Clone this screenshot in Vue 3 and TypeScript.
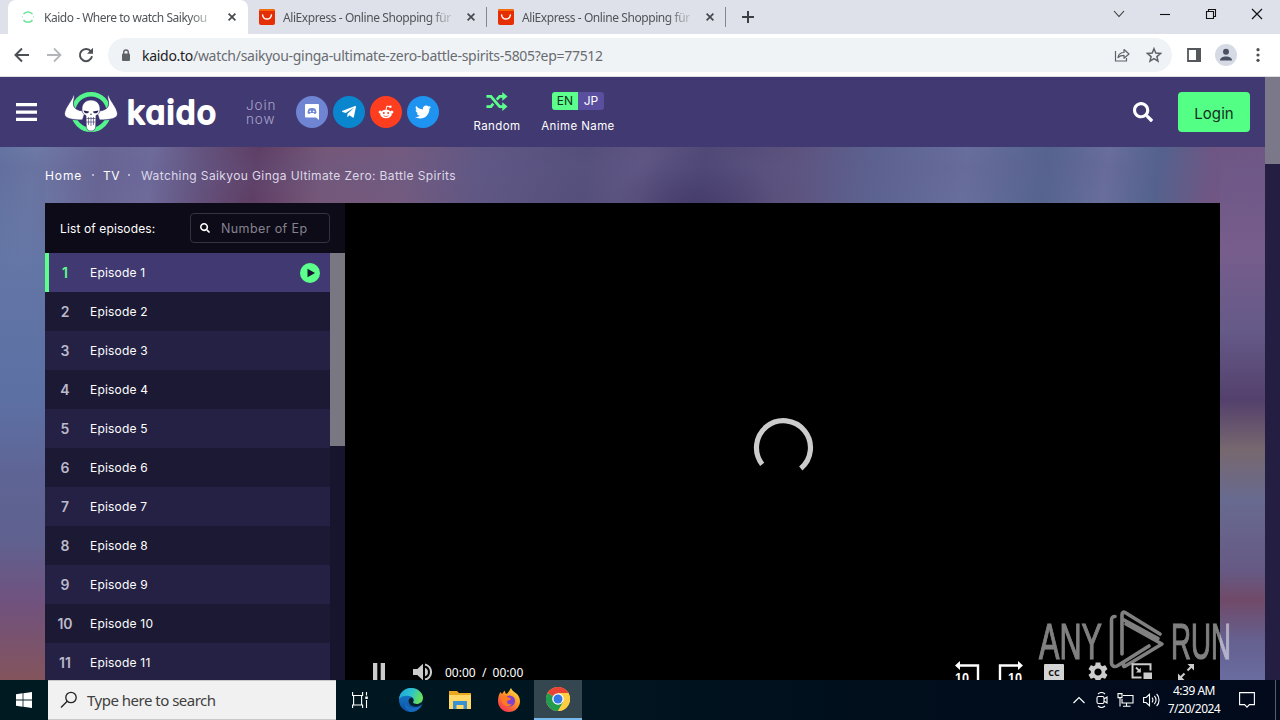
<script setup lang="ts">
interface Tab {
  title: string
  kind: 'kaido' | 'ali'
  active: boolean
}

const tabs: Tab[] = [
  { title: 'Kaido - Where to watch Saikyou', kind: 'kaido', active: true },
  { title: 'AliExpress - Online Shopping für', kind: 'ali', active: false },
  { title: 'AliExpress - Online Shopping für', kind: 'ali', active: false },
]

const episodes: number[] = Array.from({ length: 11 }, (_, i) => i + 1)
</script>

<template>
  <div class="screen">
    <div class="tabstrip">
      <div v-for="(tab, i) in tabs" :key="i" class="tab" :class="{ active: tab.active }">
        <svg v-if="tab.kind === 'kaido'" class="fav" viewBox="0 0 16 16" fill="none" stroke="#6fe39a" stroke-width="1.5">
          <path d="M3.500 5.200a5.200 4.500 0 0 1 9 0" />
          <path d="M3.500 11a5.200 4.500 0 0 0 9 0" />
          <path d="M2.500 7v2M13.500 7v2" stroke="#c5f3d4" stroke-width="1" />
        </svg>
        <svg v-else class="fav" viewBox="0 0 16 16">
          <rect width="16" height="16" rx="2" fill="#e62e04" />
          <path d="M0 2a2 2 0 0 1 2-2h12a2 2 0 0 1 2 2H0z" fill="#f26a0c" />
          <path d="M3.600 6c.8 5.400 8 5.400 8.800 0" fill="none" stroke="#fff" stroke-width="1.500" stroke-linecap="round" />
        </svg>
        <span class="tab-title">{{ tab.title }}</span>
        <svg class="close" viewBox="0 0 8 8" stroke="#45494d" stroke-width="1.700"><path d="M.6.6l6.800 6.800M7.400.6L.6 7.400" /></svg>
      </div>
      <svg class="plus" viewBox="0 0 12 12" stroke="#3c4043" stroke-width="2"><path d="M6 0v12M0 6h12" /></svg>
      <div class="winbtns">
        <svg width="12" height="12" viewBox="0 0 12 12" fill="none" stroke="#333" stroke-width="1.100"><path d="M1 3l5 5.500L11 3" /></svg>
        <svg width="12" height="12" viewBox="0 0 12 12" stroke="#111" stroke-width="1.100"><path d="M1 6.500h10" /></svg>
        <svg width="12" height="12" viewBox="0 0 12 12" fill="none" stroke="#111" stroke-width="1.100"><path d="M1.500 3.500h7v7h-7zM3.500 3.500v-2h7v7h-2" /></svg>
        <svg width="12" height="12" viewBox="0 0 12 12" stroke="#111" stroke-width="1.200"><path d="M1 1l10 10M11 1L1 11" /></svg>
      </div>
    </div>

    <div class="toolbar">
      <div class="nav">
        <svg width="16" height="16" viewBox="0 0 16 16" fill="none" stroke="#4c5054" stroke-width="2"><path d="M15 8H2M8 1.500L1.500 8 8 14.500" /></svg>
        <svg width="16" height="16" viewBox="0 0 16 16" fill="none" stroke="#b4b6b9" stroke-width="1.800"><path d="M1 8h13M8 1.500L14.500 8 8 14.500" /></svg>
        <svg width="16" height="16" viewBox="0 0 16 16"><path d="M13 4.500A6.100 6.100 0 1 0 14 9.300" fill="none" stroke="#4c5054" stroke-width="2" /><path d="M15 .8v6H9z" fill="#4c5054" /></svg>
      </div>
      <div class="omnibox">
        <svg class="lock" width="10" height="13" viewBox="0 0 10 13"><rect x="1" y="4.500" width="8" height="7.500" rx="1" fill="#5f6368" /><path d="M2.700 5V3.300a2.300 2.300 0 0 1 4.600 0V5" fill="none" stroke="#5f6368" stroke-width="1.400" /></svg>
        <span class="url"><b>kaido.to</b>/watch/saikyou-ginga-ultimate-zero-battle-spirits-5805?ep=77512</span>
        <svg class="share" width="16" height="16" viewBox="0 0 16 16" fill="none" stroke="#5f6368" stroke-width="1.200"><path d="M1.500 4v10h11v-3" /><path d="M4 10.500c.6-3.500 2.600-5 6-5V2.500L15 7l-5 4.200V8.300c-3 0-4.500.7-6 2.200z" stroke-linejoin="round" /></svg>
        <svg width="16" height="16" viewBox="0 0 16 16" fill="none" stroke="#5f6368" stroke-width="1.500"><path d="M8 1.700l1.800 4.400 4.700.4-3.600 3.100 1.100 4.600L8 11.700l-4 2.500 1.100-4.600L1.500 6.500l4.700-.4z" /></svg>
      </div>
      <svg class="panel" width="14" height="14" viewBox="0 0 14 14"><path d="M1 1h12v12H1z" fill="none" stroke="#54585c" stroke-width="1.800" /><path d="M9 0h5v14H9z" fill="#54585c" /></svg>
      <svg class="avatar" width="22" height="22" viewBox="0 0 22 22"><circle cx="11" cy="11" r="11" fill="#d6dae5" /><circle cx="11" cy="7.800" r="3" fill="#4a5062" /><path d="M5 16.500c0-5.300 12-5.300 12 0z" fill="#4a5062" /></svg>
      <svg class="dots" width="4" height="14" viewBox="0 0 4 14" fill="#4c5054"><circle cx="2" cy="1.700" r="1.600" /><circle cx="2" cy="7" r="1.600" /><circle cx="2" cy="12.300" r="1.600" /></svg>
    </div>

    <div class="viewport">
      <div class="site">
        <header class="header">
          <svg class="burger" width="21" height="18" viewBox="0 0 21 18" fill="#fff"><path d="M0 0h21v3.300H0zM0 7.400h21v3.300H0zM0 14.700h21V18H0z" /></svg>
          <svg class="logo" width="154" height="42" viewBox="0 0 154 42">
            <circle cx="27" cy="21" r="17.800" fill="#3a3270" stroke="#54f58b" stroke-width="4.400" />
            <path d="M9.500 3C9 9 1 16 .5 22.500c-.3 5 7 6.500 18 6.500l3-9C13 20 8.500 17 9.500 11c.5-3 1.500-5 0-8zM44.500 3c.5 6 8.500 13 9 19.500.3 5-7 6.500-18 6.500l-3-9c8.500 0 13-3 12-9-.5-3-1.500-5 0-8z" fill="#fff" stroke="#3a3270" stroke-width=".8" />
            <path d="M27 9c-6 0-9.500 4.500-9 10 .2 3 1.800 4.500 4 5.500l.3 11c.3 3 2 4.500 4.700 4.500s4.400-1.500 4.700-4.500l.3-11c2.200-1 3.800-2.500 4-5.500C36.500 13.500 33 9 27 9z" fill="#fff" stroke="#3a3270" stroke-width=".6" />
            <path d="M19.500 19.500l5.500 1c0 2.500-4.800 2.700-5.500-1zM34.500 19.500L29 20.500c0 2.500 4.800 2.700 5.500-1zM26.200 24l.8-2 .8 2z" fill="#29254e" />
            <path d="M22.500 27.500h9M22.500 31h9M24.500 26v8M27 26v9M29.500 26v8" stroke="#4c4775" stroke-width=".7" />
            <text class="wordmark" x="63" y="33" textLength="89">kaido</text>
          </svg>
          <div class="join">Join<br />now</div>
          <div class="socials">
            <i class="discord"><svg width="16" height="18" viewBox="0 0 16 18"><path d="M2 1h12a1 1 0 0 1 1 1v15l-3-2.500H2a1 1 0 0 1-1-1V2a1 1 0 0 1 1-1z" fill="#fff" /><path d="M3.500 10c.2-2 .8-3.800 1.500-4.500 2-.8 4-.8 6 0 .7.700 1.300 2.500 1.500 4.500-1 1-1.700 1-2.300.8l-.6-.8H6.400l-.6.800c-.8.200-1.500.1-2.300-.8z" fill="#6f84d2" /><circle cx="6.300" cy="8.300" r=".9" fill="#fff" /><circle cx="9.700" cy="8.300" r=".9" fill="#fff" /></svg></i>
            <i class="telegram"><svg width="16" height="16" viewBox="0 0 448 512"><path fill="#fff" d="M446.700 98.600l-67.600 318.800c-5.100 22.500-18.400 28.100-37.300 17.500l-103-75.900-49.700 47.800c-5.500 5.500-10.100 10.100-20.700 10.100l7.400-104.900 190.900-172.500c8.300-7.400-1.800-11.500-12.900-4.100L117.800 284 16.200 252.200c-22.100-6.900-22.500-22.100 4.600-32.700L418.200 66.400c18.400-6.900 34.500 4.100 28.500 32.200z" /></svg></i>
            <i class="reddit"><svg width="16" height="16" viewBox="0 0 16 16"><ellipse cx="8" cy="10" rx="5.800" ry="4.300" fill="#fff" /><circle cx="2.200" cy="8" r="1.600" fill="#fff" /><circle cx="13.800" cy="8" r="1.600" fill="#fff" /><path d="M8 6l.9-4 3.200.8" fill="none" stroke="#fff" /><circle cx="12.400" cy="2.800" r="1.200" fill="#fff" /><circle cx="5.800" cy="9" r="1" fill="#ff3d1f" /><circle cx="10.200" cy="9" r="1" fill="#ff3d1f" /><path d="M5.600 11.700c1.300 1 3.500 1 4.800 0" fill="none" stroke="#ff3d1f" stroke-width=".8" /></svg></i>
            <i class="twitter"><svg width="16" height="16" viewBox="0 0 512 512"><path fill="#fff" d="M459.370 151.716c.325 4.548.325 9.097.325 13.645 0 138.720-105.583 298.558-298.558 298.558-59.452 0-114.680-17.219-161.137-47.106 8.447.974 16.568 1.299 25.340 1.299 49.055 0 94.213-16.568 130.274-44.832-46.132-.975-84.792-31.188-98.112-72.772 6.498.974 12.995 1.624 19.818 1.624 9.421 0 18.843-1.300 27.614-3.573-48.081-9.747-84.143-51.980-84.143-102.985v-1.299c13.969 7.797 30.214 12.670 47.431 13.319-28.264-18.843-46.781-51.005-46.781-87.391 0-19.492 5.197-37.360 14.294-52.954 51.655 63.675 129.300 105.258 216.365 109.807-1.624-7.797-2.599-15.918-2.599-24.040 0-57.828 46.782-104.934 104.934-104.934 30.213 0 57.502 12.670 76.670 33.137 23.715-4.548 46.456-13.320 66.599-25.340-7.798 24.366-24.366 44.833-46.132 57.827 21.117-2.273 41.584-8.122 60.426-16.243-14.292 20.791-32.161 39.308-52.628 54.253z" /></svg></i>
          </div>
          <div class="tool random">
            <svg width="22" height="19" viewBox="0 0 20 18"><path d="M0 4.200h4.200L12.500 13.800H16M0 13.800h4.200l2.300-2.700M9.800 7.200l2.700-3H16" fill="none" stroke="#5cff8c" stroke-width="2.600" /><path d="M15 0l5 4.200-5 4.200zM15 9.600l5 4.200-5 4.200z" fill="#5cff8c" /></svg>
            <span>Random</span>
          </div>
          <div class="tool names">
            <div class="langs"><b>EN</b><b>JP</b></div>
            <span>Anime Name</span>
          </div>
          <svg class="find" width="20" height="20" viewBox="0 0 512 512" fill="#fff"><path d="M505 442.700L405.300 343c-4.500-4.500-10.600-7-17-7H372c27.600-35.300 44-79.700 44-128C416 93.100 322.900 0 208 0S0 93.100 0 208s93.100 208 208 208c48.300 0 92.700-16.400 128-44v16.300c0 6.400 2.500 12.500 7 17l99.700 99.700c9.400 9.400 24.600 9.400 33.900 0l28.300-28.300c9.400-9.400 9.400-24.600.1-34zM208 336c-70.700 0-128-57.200-128-128 0-70.700 57.200-128 128-128 70.700 0 128 57.200 128 128 0 70.700-57.200 128-128 128z" /></svg>
          <button class="login">Login</button>
        </header>

        <main class="main">
          <nav class="crumbs"><span class="home">Home</span><i></i><span class="tv">TV</span><i></i><em>Watching Saikyou Ginga Ultimate Zero: Battle Spirits</em></nav>
          <section class="watch">
            <aside class="list">
              <div class="list-head">
                <span>List of episodes:</span>
                <div class="filter">
                  <svg width="10" height="10" viewBox="0 0 512 512" fill="#fff"><path d="M505 442.700L405.300 343c-4.500-4.500-10.600-7-17-7H372c27.600-35.300 44-79.700 44-128C416 93.100 322.900 0 208 0S0 93.100 0 208s93.100 208 208 208c48.300 0 92.700-16.400 128-44v16.300c0 6.400 2.500 12.500 7 17l99.700 99.700c9.400 9.400 24.600 9.400 33.900 0l28.300-28.300c9.400-9.400 9.400-24.600.1-34zM208 336c-70.700 0-128-57.200-128-128 0-70.700 57.200-128 128-128 70.700 0 128 57.200 128 128 0 70.700-57.200 128-128 128z" /></svg>
                  <span>Number of Ep</span>
                </div>
              </div>
              <div class="list-body">
                <ul>
                  <li v-for="n in episodes" :key="n" :class="{ on: n === 1 }">
                    <b>{{ n }}</b><span>Episode {{ n }}</span>
                    <svg v-if="n === 1" width="20" height="20" viewBox="0 0 20 20"><circle cx="10" cy="10" r="10" fill="#5cff8c" /><path d="M7.500 5.700l7.500 4.300-7.500 4.300z" fill="#171530" /></svg>
                  </li>
                </ul>
                <div class="list-scroll"><div></div></div>
              </div>
            </aside>
            <div class="player">
              <svg class="spinner" width="64" height="64" viewBox="0 0 64 64"><path d="M12.200 48.300A27 27 0 1 1 50.800 52.400" fill="none" stroke="#ccc" stroke-width="5.200" /></svg>
              <div class="controls">
                <svg class="pause" width="12" height="18" viewBox="0 0 12 18" fill="#ccc"><path d="M0 0h4.300v18H0zM7.700 0H12v18H7.700z" /></svg>
                <svg class="vol" width="20" height="18" viewBox="0 0 20 18"><path d="M0 6h4.300L10 .7v16.600L4.300 12H0z" fill="#ccc" /><path d="M12 1.400a7.800 7.800 0 0 1 0 15.200" fill="none" stroke="#ccc" stroke-width="2.100" /><path d="M12 4.700a4.600 4.600 0 0 1 0 8.600z" fill="#ccc" /></svg>
                <span class="time">00:00&nbsp; /&nbsp; 00:00</span>
                <svg class="back" width="26" height="26" viewBox="0 0 26 26"><path d="M4 4.500h19V26" fill="none" stroke="#fff" stroke-width="2.400" /><path d="M0 4.500L5 0v9z" fill="#fff" /><text x="0" y="22" textLength="14" lengthAdjust="spacingAndGlyphs">10</text></svg>
                <svg class="fwd" width="26" height="26" viewBox="0 0 26 26"><path d="M22 4.500H3V26" fill="none" stroke="#fff" stroke-width="2.400" /><path d="M26 4.500L21 0v9z" fill="#fff" /><text x="11" y="22" textLength="14" lengthAdjust="spacingAndGlyphs">10</text></svg>
                <div class="cc">CC</div>
                <svg class="gear" width="20" height="20" viewBox="2 2 20 20"><path fill="#ccc" d="M19.140 12.940c.04-.3.06-.61.06-.94 0-.32-.02-.64-.07-.94l2.030-1.580c.18-.14.23-.41.12-.61l-1.920-3.320c-.12-.22-.37-.29-.59-.22l-2.390.96c-.5-.38-1.030-.7-1.620-.94l-.36-2.540c-.04-.24-.24-.41-.48-.41h-3.840c-.24 0-.43.17-.47.41l-.36 2.540c-.59.24-1.130.57-1.620.94l-2.390-.96c-.22-.08-.47 0-.59.22L2.740 8.870c-.12.21-.08.47.12.61l2.030 1.580c-.05.3-.09.63-.09.94s.02.64.07.94l-2.030 1.580c-.18.14-.23.41-.12.61l1.920 3.320c.12.22.37.29.59.22l2.390-.96c.5.38 1.030.7 1.620.94l.36 2.540c.05.24.24.41.48.41h3.840c.24 0 .44-.17.47-.41l.36-2.540c.59-.24 1.130-.56 1.620-.94l2.390.96c.22.08.47 0 .59-.22l1.920-3.320c.12-.22.07-.47-.12-.61l-2.010-1.580zM12 15.600c-1.980 0-3.600-1.620-3.600-3.600s1.620-3.600 3.600-3.600 3.600 1.620 3.600 3.600-1.620 3.600-3.600 3.600z" /></svg>
                <svg class="pip" width="22" height="18" viewBox="0 0 22 18"><path d="M10.500 14.500h-9V1.200h18v6.300" fill="none" stroke="#ccc" stroke-width="2" /><path d="M12.500 9.500H21V16h-8.500z" fill="#ccc" /><path d="M5 4.500l3.500 3.500" stroke="#ccc" stroke-width="1.800" /><path d="M9.800 4.800v4.800H5z" fill="#ccc" /></svg>
                <svg class="full" width="18" height="18" viewBox="0 0 18 18"><path d="M3 15l4.500-4.500M10.500 7.500L15 3" stroke="#ccc" stroke-width="2" /><path d="M10.500 1H17v6.500zM1 10.500V17h6.500z" fill="#ccc" /></svg>
              </div>
            </div>
          </section>
        </main>
      </div>
      <div class="page-scroll"><div></div></div>
    </div>

    <div class="taskbar">
      <svg class="win" width="16" height="16" viewBox="0 0 16 16" fill="#fff"><path d="M0 2.300l6.600-1v6.300H0zM7.400 1.200L16 0v7.600H7.400zM0 8.400h6.600v6.300l-6.600-1zM7.400 8.400H16V16l-8.600-1.200z" /></svg>
      <div class="search">
        <svg width="18" height="18" viewBox="0 0 18 18" fill="none" stroke="#222" stroke-width="1.300"><circle cx="11" cy="6.500" r="5.200" /><path d="M7.200 10.200L1 16.500" /></svg>
        <span>Type here to search</span>
      </div>
      <div class="app"><svg width="16" height="16" viewBox="0 0 16 16" fill="none" stroke="#fff" stroke-width="1.100"><path d="M.6 0v3.500h10V0M.6 16v-3h10v3M1.600 3.500v9.500h8V3.500M14.500 0v3.500M14.500 8v8" /><path d="M13.300 4.500h2.500v2.500h-2.500z" fill="#fff" stroke="none" /></svg></div>
      <div class="app edge">
        <svg width="24" height="24" viewBox="0 0 24 24">
          <defs>
            <linearGradient id="eg" x1="0" y1="0" x2="1" y2=".3"><stop offset="0" stop-color="#1fa6dc" /><stop offset=".55" stop-color="#2cc3cf" /><stop offset="1" stop-color="#66e05b" /></linearGradient>
            <linearGradient id="eb" x1="0" y1="0" x2="0" y2="1"><stop offset="0" stop-color="#1686d5" /><stop offset="1" stop-color="#0d4f9e" /></linearGradient>
          </defs>
          <circle cx="12" cy="12" r="12" fill="url(#eb)" />
          <path d="M0 11C1 4 6 0 12 0c7 0 12 5 12 10 0 4-3 6-6.500 6-2 0-4-.8-3.400-2 1.300-1.500 1-5-3.600-6C6 7 2 8 0 11z" fill="url(#eg)" />
          <path d="M13 9.500c-4 0-5 6 0 8.500 3.500 1.700 7.500.5 9.800-1.500l1.200.5V11c-.6 3.600-3.400 5-6.500 5-2 0-4-.8-3.400-2 .8-1.200.8-3-1.100-4.500z" fill="#06202e" />
          <path d="M22.500 17.300C20 22 16 24 12 24c-4.500-1-7-5-5.500-9.500C8 20 15 21.500 22.500 17.300z" fill="#1769bd" />
        </svg>
      </div>
      <div class="app"><svg width="22" height="20" viewBox="0 0 22 20"><path d="M0 1h8l2 2h12v16H0z" fill="#e9a820" /><path d="M0 5h22v14H0z" fill="#ffd868" /><path d="M4 11h14v8h-3.500v-4h-7v4H4z" fill="#3a91cf" /></svg></div>
      <div class="app">
        <svg width="24" height="24" viewBox="0 0 24 24">
          <defs><linearGradient id="ff" x1=".9" y1="0" x2=".2" y2="1"><stop offset="0" stop-color="#fff04a" /><stop offset=".45" stop-color="#ff9324" /><stop offset="1" stop-color="#f52d55" /></linearGradient></defs>
          <path d="M14 0c1 3 4 4 6 6 3 3 3.500 7 2.500 10.500C21 21 17 24 12 24 5.500 24 1 19 1 13c0-4 1-7 2.500-9L5 6l2.500-3.500L9 6c2 0 3-3 5-6z" fill="url(#ff)" />
          <circle cx="12.500" cy="13" r="5.600" fill="#8141cf" />
          <path d="M5 8c3-1 5 0 6 1.500 2 0 3 .8 3 1.500-1 1.500-3 1-4 2.500-.5 2 2 3.500 5 2.500-3 4-10 2-10-3z" fill="#ff7b22" />
        </svg>
      </div>
      <div class="app current">
        <svg width="24" height="24" viewBox="0 0 24 24"><circle cx="12" cy="12" r="12" fill="#ffcd42" /><path d="M12 12L1.600 6A12 12 0 0 1 22.400 6z" fill="#ea4335" /><path d="M1.600 6A12 12 0 0 0 12 24l5.200-9L12 12z" fill="#249c4e" /><path d="M22.400 6H12v6l5.200 3L12 24A12 12 0 0 0 22.400 6z" fill="#ffcd42" /><circle cx="12" cy="12" r="5.800" fill="#fff" /><circle cx="12" cy="12" r="4.500" fill="#3478e5" /></svg>
      </div>
      <div class="tray">
        <svg class="chev" width="12" height="8" viewBox="0 0 12 8" fill="none" stroke="#fff" stroke-width="1.200"><path d="M.5 7L6 1.500 11.500 7" /></svg>
        <svg width="12" height="16" viewBox="0 0 12 16" fill="none" stroke="#fff" stroke-width="1.100"><rect x="1" y="4.500" width="7" height="7" rx="1.500" /><path d="M8 7l3-2v6L8 9M2 2c2-1.700 5-1.700 7 0M2 14c2 1.700 5 1.700 7 0" /></svg>
        <svg width="17" height="14" viewBox="0 0 16 14" fill="none" stroke="#fff" stroke-width="1.100"><path d="M5.500 2.500h10v7.500h-11V6M9 10v3M5.500 13.300h7.500M.5.600h4v4h-4zM2.500 4.600v9" /></svg>
        <svg width="17" height="14" viewBox="0 0 17 14" fill="none" stroke="#fff" stroke-width="1.100"><path d="M.6 4.500h2.500L6.500 1.300v11.400L3.100 9.500H.6zM9 4.700c1.200 1.200 1.200 3.400 0 4.600M11.300 2.900c2.300 2.200 2.300 6 0 8.200M13.600 1c3.300 3.200 3.300 8.800 0 12" /></svg>
      </div>
      <div class="clock"><span>4:39 AM</span><span>7/20/2024</span></div>
      <svg class="note" width="16" height="16" viewBox="0 0 16 16" fill="none" stroke="#fff" stroke-width="1.100"><path d="M.6.6h14.800v12h-5l-2.400 2.600-2.400-2.600h-5z" /></svg>
      <i class="peek"></i>
    </div>

    <svg class="watermark" width="196" height="66" viewBox="0 0 196 66">
      <text x="2" y="51" textLength="63" lengthAdjust="spacingAndGlyphs">ANY</text>
      <g fill="none" stroke="#fff" stroke-width="3.600" stroke-linejoin="round" stroke-linecap="round">
        <path d="M78 8.500c-3 0-3.500 1.500-3.500 4v42c0 3.500 3 5 6 3.200L112 38" />
        <path d="M123 26L88.500 4.700c-2-1.200-3.500-.5-3.500 2V46" />
        <path d="M121 30.500L87 12M89 16l36 20-36.500 22c-1.500 1-2.500 0-2-2" />
      </g>
      <text x="134" y="51" textLength="60" lengthAdjust="spacingAndGlyphs">RUN</text>
    </svg>
  </div>
</template>

<style>
body {
  background: #000;
  overflow: hidden;
}
</style>

<style scoped>
* {
  box-sizing: border-box;
}
svg {
  display: block;
  flex: none;
}
.screen {
  position: relative;
  display: flex;
  flex-direction: column;
  width: 1280px;
  height: 720px;
  overflow: hidden;
  font-family: 'Noto Sans', 'Open Sans', sans-serif;
}
.tabstrip {
  display: flex;
  align-items: center;
  height: 34px;
  padding-left: 8px;
  background: #dee1e9;
}
.tab {
  display: flex;
  align-items: center;
  width: 239px;
  height: 34px;
  padding: 0 11px;
  flex: none;
  color: #505458;
  font-size: 12px;
}
.tab.active {
  width: 240px;
  padding: 0 12px;
  border-radius: 8px 8px 0 0;
  background: #fff;
}
.tab:not(.active) {
  background: linear-gradient(#85888e, #85888e) right 0 center / 1px 20px no-repeat;
}
.fav {
  width: 16px;
  height: 16px;
}
.tab-title {
  width: 172px;
  margin-left: 8px;
  white-space: nowrap;
  letter-spacing: -0.42px;
  -webkit-mask-image: linear-gradient(90deg, #000 145px, transparent 174px);
  mask-image: linear-gradient(90deg, #000 145px, transparent 174px);
}
.tab.active .tab-title {
  letter-spacing: -0.48px;
}
.close {
  width: 8px;
  height: 8px;
  margin-left: 12px;
}
.plus {
  width: 12px;
  height: 12px;
  margin-left: 16px;
}
.winbtns {
  display: flex;
  gap: 34px;
  margin-left: auto;
  padding-right: 17px;
  padding-bottom: 6px;
}
.toolbar {
  display: flex;
  align-items: center;
  height: 43px;
  background: #fff;
  border-bottom: 1px solid #dcdee2;
}
.nav {
  display: flex;
  gap: 16px;
  width: 108px;
  padding-left: 14px;
}
.omnibox {
  display: flex;
  align-items: center;
  width: 1064px;
  height: 34px;
  padding: 0 10px 0 13px;
  border-radius: 17px;
  background: #f0f3f6;
}
.url {
  flex: 1;
  margin-left: 11px;
  color: #686c71;
  font-size: 14px;
  white-space: nowrap;
  letter-spacing: -0.29px;
}
.url b {
  color: #202124;
  font-weight: 400;
}
.share {
  margin-right: 16px;
}
.panel {
  margin-left: 15px;
}
.avatar {
  margin-left: 14px;
}
.dots {
  margin-left: 19px;
}
.viewport {
  display: flex;
  height: 603px;
  overflow: hidden;
  font-family: Inter, 'Noto Sans', sans-serif;
}
.site {
  width: 1265px;
  background:
    linear-gradient(transparent 40px, rgba(96, 92, 144, 0.35) 90px, transparent 180px),
    radial-gradient(ellipse 80px 50px at 695px 125px, #3c3260cc 10%, transparent 100%),
    linear-gradient(#7080a800 70px, #6275a5 200px, #5d70a4 323px, #5e6494 403px, #5f618f 463px, #70527f 523px, #83545c 603px) left / 45px 100% no-repeat,
    linear-gradient(#75547f00 70px, #775d8c 173px, #655a88 253px, #54406c 323px, #77686f 373px, #686a90 423px, #665a85 493px, #704a68 523px, #65608f 563px, #6a6ca0 603px) right / 45px 100% no-repeat,
    linear-gradient(97deg, #6078a5 0, #7282ab 45px, #6a6896 110px, #726f9e 160px, #655078 210px, #5f3658 265px, #7a5672 330px, #795a7a 410px, #5f5580 490px, #524b75 590px, #5e537e 650px, #4b426e 710px, #5c5079 800px, #5b6490 880px, #6a73a0 970px, #52668e 1050px, #6b739f 1110px, #50648c 1160px, #74547f 1215px, #765584 1320px);
}
.header {
  display: flex;
  align-items: center;
  height: 70px;
  padding: 0 15px 0 16px;
  background: #413971;
}
.logo {
  margin-left: 27px;
}
.wordmark {
  fill: #fff;
  stroke: #fff;
  stroke-width: 1.8;
  stroke-linejoin: round;
  font: 500 32px Inter, sans-serif;
  font-feature-settings: 'cv11';
}
.join {
  width: 50px;
  margin-left: 28px;
  color: #a9a4c9;
  font-size: 13.500px;
  font-weight: 300;
  line-height: 14px;
  letter-spacing: 0.9px;
}
.socials {
  display: flex;
  gap: 5px;
}
.socials i {
  display: flex;
  align-items: center;
  justify-content: center;
  width: 32px;
  height: 32px;
  border-radius: 50%;
}
.discord {
  background: #6f84d2;
}
.telegram {
  background: #0a86ce;
}
.reddit {
  background: #ff3d1f;
}
.twitter {
  background: #1e94f0;
}
.tool {
  display: flex;
  flex-direction: column;
  align-items: center;
  color: #fff;
  font-size: 11.500px;
  white-space: nowrap;
}
.tool > span {
  margin-top: 9px;
  line-height: 14px;
  letter-spacing: 0.4px;
}
.random {
  width: 48px;
  margin-left: 34px;
}
.random > span {
  margin-top: 8px;
}
.names {
  width: 76px;
  margin-left: 19px;
}
.langs {
  display: flex;
  width: 52px;
  height: 18px;
  border-radius: 3px;
  overflow: hidden;
}
.langs b {
  width: 26px;
  background: #5a4e9e;
  font-size: 12px;
  font-weight: 400;
  line-height: 18px;
  text-align: center;
}
.langs b:first-child {
  background: #5cff8c;
  color: #14321f;
}
.find {
  margin-left: auto;
}
.login {
  width: 72px;
  height: 40px;
  margin-left: 25px;
  padding: 2px 0 0;
  border: 0;
  border-radius: 4px;
  background: #54ff85;
  color: #172d24;
  font: 400 15px Inter, sans-serif;
  letter-spacing: 0.1px;
}
.main {
  padding: 0 45px;
}
.crumbs {
  display: flex;
  align-items: center;
  height: 56px;
  color: #fff;
  font-size: 12px;
  white-space: nowrap;
}
.crumbs span,
.crumbs em {
  letter-spacing: 0.38px;
}
.crumbs .home {
  width: 38px;
  letter-spacing: 0.9px;
}
.crumbs .tv {
  width: 16px;
}
.crumbs i {
  width: 2px;
  height: 2px;
  margin: 0 9px;
  border-radius: 50%;
  background: #d5d0e2;
}
.crumbs em {
  margin-left: 2px;
  color: #ddd8e8;
  font-style: normal;
}
.watch {
  display: flex;
  height: 477px;
  background: #000;
}
.list {
  width: 300px;
  background: #17142d;
}
.list-head {
  display: flex;
  align-items: center;
  justify-content: space-between;
  height: 50px;
  padding: 0 15px;
  background: #0d0b17;
  color: #fff;
  font-size: 12px;
  letter-spacing: 0.12px;
}
.filter {
  display: flex;
  align-items: center;
  gap: 11px;
  width: 140px;
  height: 30px;
  padding-left: 9px;
  border: 1px solid #343140;
  border-radius: 4px;
  color: #85828f;
  font-size: 12.500px;
  letter-spacing: 0.4px;
}
.list-body {
  display: flex;
}
.list-body ul {
  width: 285px;
  margin: 0;
  padding: 0;
  list-style: none;
}
.list-body li {
  display: flex;
  align-items: center;
  height: 39px;
  background: #242144;
  color: #fff;
  font-size: 12px;
}
.list-body li:nth-child(even) {
  background: #1b1933;
}
.list-body li b {
  width: 40px;
  color: #bcb9cb;
  font-size: 14px;
  font-weight: 600;
  text-align: center;
}
.list-body li span {
  flex: 1;
  margin-left: 5px;
  letter-spacing: 0.2px;
}
.list-body li svg {
  margin-right: 10px;
}
.list-body li.on {
  background: linear-gradient(90deg, #5cff8c 4px, #413971 4px);
}
.list-body li.on b {
  color: #5cff8c;
}
.list-scroll {
  width: 15px;
  height: 427px;
  background: #17142d;
}
.list-scroll div {
  height: 193px;
  background: #797781;
}
.player {
  display: flex;
  flex-direction: column;
  flex: 1;
  overflow: hidden;
}
.spinner {
  margin: 213px 0 0 404.500px;
}
.controls {
  display: flex;
  align-items: center;
  height: 28px;
  margin-top: 178px;
  padding-left: 28px;
  flex: none;
}
.vol {
  margin-left: 28px;
}
.time {
  width: 510px;
  margin-left: 12px;
  color: #fff;
  font: 12px 'Noto Sans', sans-serif;
}
.back text,
.fwd text {
  fill: #fff;
  font: 700 15px 'Liberation Sans', sans-serif;
}
.back,
.fwd {
  margin-top: 3px;
}
.fwd {
  margin-left: 16px;
}
.cc {
  width: 20px;
  height: 17px;
  margin-left: 21px;
  border-radius: 1px;
  background: #d4d4d4;
  color: #111;
  font: 700 9px/17px 'Open Sans', sans-serif;
  text-align: center;
}
.gear {
  margin-left: 24px;
}
.pip {
  margin-left: 23px;
}
.full {
  margin-left: 24px;
}
.page-scroll {
  width: 15px;
  background: #241e42;
}
.page-scroll div {
  height: 87px;
  background: #7b788a;
}
.taskbar {
  display: flex;
  align-items: center;
  height: 40px;
  background: linear-gradient(90deg, #001a22, #001620 40%, #010d1c 75%, #020a1c);
}
.win {
  margin: 0 16px;
}
.search {
  display: flex;
  align-items: center;
  gap: 9px;
  width: 288px;
  height: 40px;
  padding-left: 12px;
  background: #f1f1f1;
  border: solid #c9c9c9;
  border-width: 1px 0;
  color: #404040;
  font-size: 15px;
  letter-spacing: -0.5px;
}
.app {
  display: flex;
  align-items: center;
  justify-content: center;
  width: 48px;
  height: 40px;
  margin-left: 1px;
}
.app:nth-of-type(2) {
  margin-left: 0;
}
.app.edge {
  margin-left: 3px;
}
.app.current {
  background: #34464f;
  border-bottom: 2px solid #76b9ed;
}
.tray {
  display: flex;
  align-items: center;
  gap: 9px;
  margin-left: auto;
}
.chev {
  margin-right: 2px;
}
.clock {
  display: flex;
  flex-direction: column;
  align-items: center;
  width: 68px;
  color: #fff;
  font-size: 12px;
  line-height: 18px;
  letter-spacing: -0.5px;
}
.note {
  margin-left: 11px;
}
.peek {
  width: 1px;
  height: 40px;
  margin: 0 4px 0 20px;
  background: #535d6b;
}
.watermark {
  position: absolute;
  left: 1037px;
  top: 608px;
  opacity: 0.5;
}
.watermark text {
  fill: #fff;
  stroke: #fff;
  stroke-width: 1.2;
  font: 50px 'Liberation Sans', sans-serif;
}
</style>
